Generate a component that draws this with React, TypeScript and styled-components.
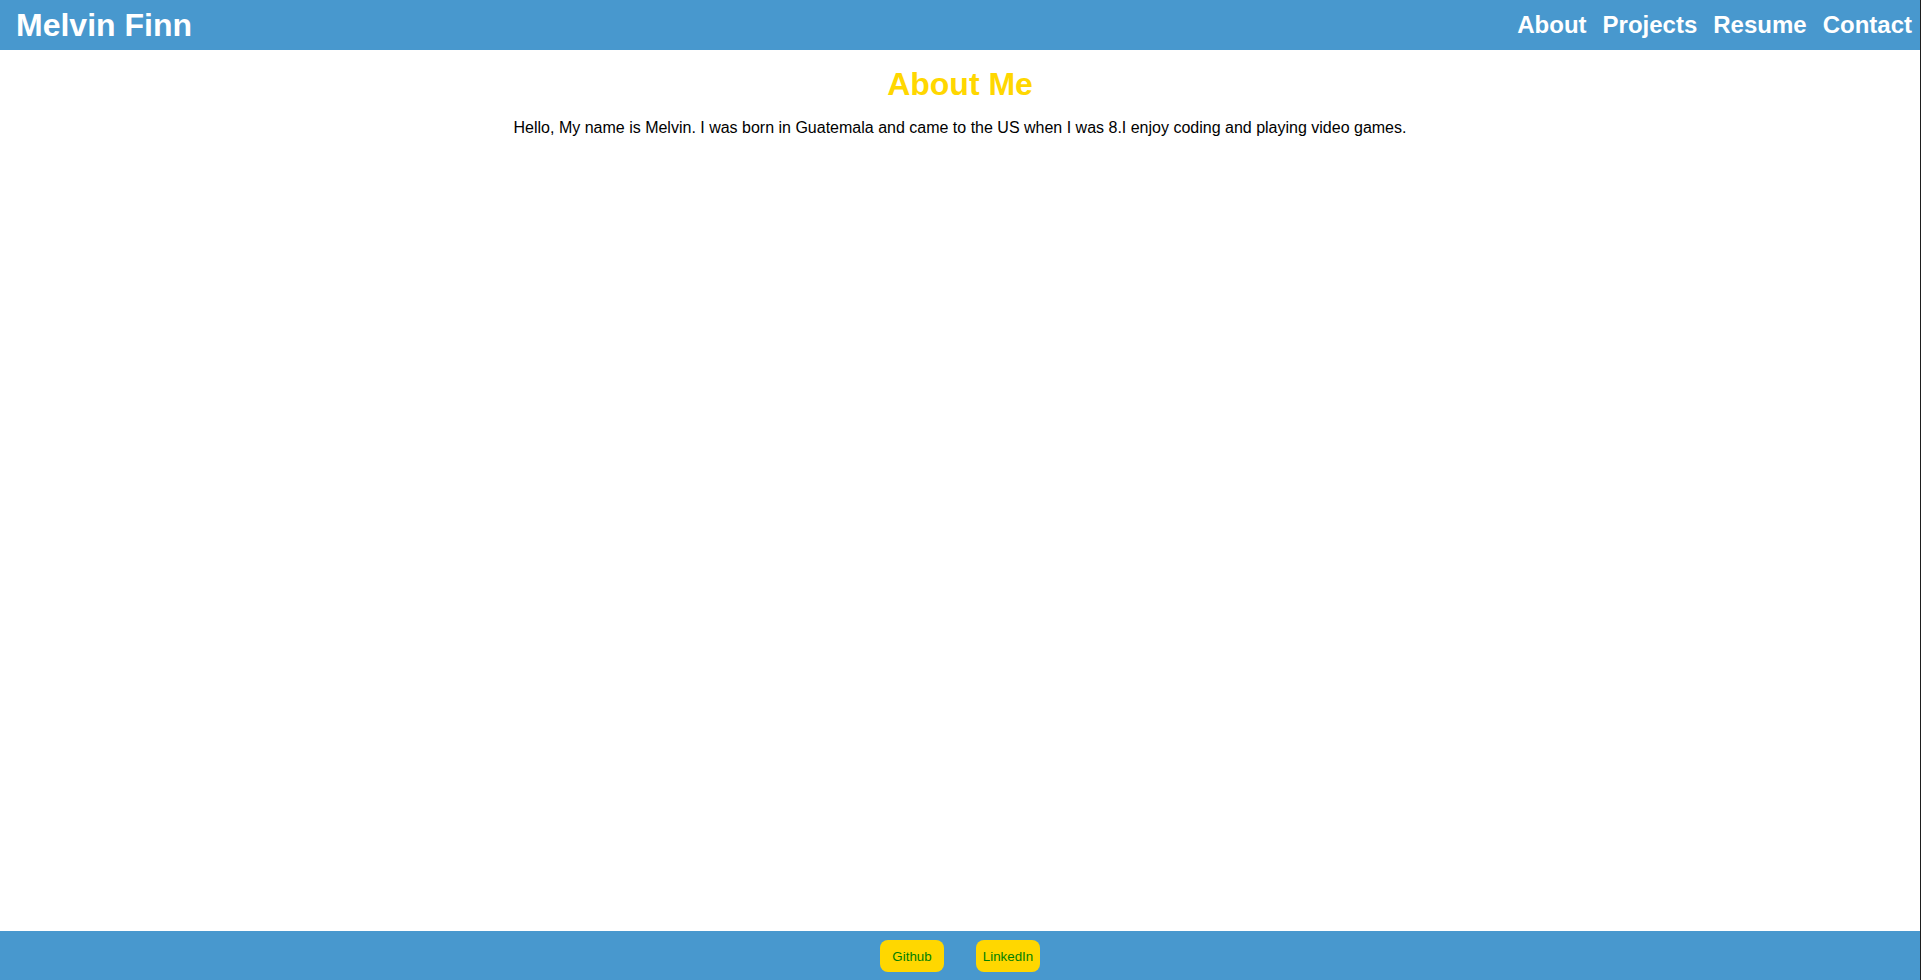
import React from "react";
import styled, { createGlobalStyle } from "styled-components";

const GlobalStyle = createGlobalStyle`
  html, body {
    margin: 0;
    padding: 0;
    background: #ffffff;
    font-family: "Liberation Sans", Arial, sans-serif;
  }
  * { box-sizing: border-box; }
`;

const Page = styled.div`
  min-height: 100vh;
  display: flex;
  flex-direction: column;
  border-right: 1px solid #1e1e1e;
`;

const Header = styled.header`
  height: 50px;
  background: #4898ce;
  display: flex;
  align-items: center;
  justify-content: space-between;
  padding: 0 8px 0 16px;
`;

const Brand = styled.h1`
  margin: 0;
  color: #ffffff;
  font-size: 32px;
  font-weight: 700;
  line-height: normal;
`;

const Nav = styled.nav`
  display: flex;
  gap: 16px;
`;

const NavLink = styled.a`
  color: #ffffff;
  font-size: 24px;
  font-weight: 700;
  text-decoration: none;
  cursor: pointer;
`;

const Main = styled.main`
  flex: 1;
  display: flex;
  flex-direction: column;
  align-items: center;
`;

const Title = styled.h2`
  margin: 16px 0 0;
  color: #ffd700;
  font-size: 32px;
  font-weight: 700;
  line-height: normal;
`;

const Bio = styled.p`
  margin: 16px 0;
  color: #000000;
  font-size: 16px;
  line-height: normal;
`;

const Footer = styled.footer`
  height: 49px;
  background: #4898ce;
  display: flex;
  align-items: center;
  justify-content: center;
  gap: 32px;
  padding-top: 1px;
`;

const SocialButton = styled.button`
  width: 64px;
  height: 32px;
  border: none;
  border-radius: 8px;
  background: #ffd700;
  color: #008000;
  font-family: "Liberation Sans", Arial, sans-serif;
  font-size: 13.333px;
  padding: 0;
  cursor: pointer;
`;

export default function App() {
  return (
    <>
      <GlobalStyle />
      <Page>
        <Header>
          <Brand>Melvin Finn</Brand>
          <Nav>
            <NavLink>About</NavLink>
            <NavLink>Projects</NavLink>
            <NavLink>Resume</NavLink>
            <NavLink>Contact</NavLink>
          </Nav>
        </Header>
        <Main>
          <Title>About Me</Title>
          <Bio>
            Hello, My name is Melvin. I was born in Guatemala and came to the US when I was 8.I enjoy coding and playing video games.
          </Bio>
        </Main>
        <Footer>
          <SocialButton>Github</SocialButton>
          <SocialButton>LinkedIn</SocialButton>
        </Footer>
      </Page>
    </>
  );
}
